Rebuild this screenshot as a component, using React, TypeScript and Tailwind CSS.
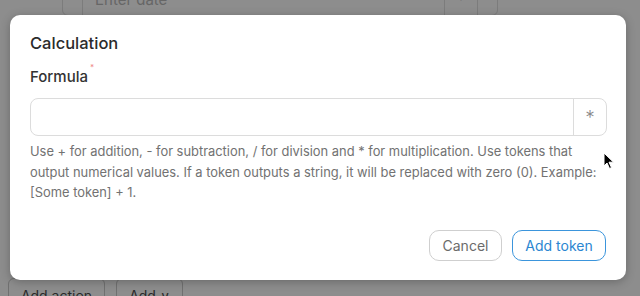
import React from "react";

function Cursor() {
  return (
    <svg width="12" height="18" viewBox="0 0 12 18" className="absolute left-[603px] top-[152px]">
      <path d="M1 1 L1 14 L4 11 L6.5 16.5 L8.5 15.6 L6 10.2 L10.5 10.2 Z" fill="#000" stroke="#fff" strokeWidth="1" strokeLinejoin="round" />
    </svg>
  );
}

export default function App() {
  return (
    <div className="relative h-[296px] w-[640px] overflow-hidden bg-[#8d8d8d] font-['Inter','Liberation_Sans',sans-serif]">
      {/* page behind the dialog, dimmed */}
      <div className="flex h-full flex-col justify-between">
        <div className="-mt-[20px] ml-[62px] flex h-[36px] w-[436px] rounded-md border border-[#7c7c7c]">
          <div className="w-[20px] border-r border-[#7c7c7c]" />
          <div className="flex flex-1 items-center pt-[4px] pl-[12px] text-[15px] leading-[20px] text-[#666]">Enter date</div>
          <div className="flex w-[34px] items-center justify-center border-l border-r border-[#7c7c7c] pt-[4px] text-[15px] leading-[20px] text-[#444]">*</div>
          <div className="w-[19px]" />
        </div>
        <div className="-mb-[10px] ml-[8px] flex gap-[11px]">
          <div className="flex h-[28px] w-[97px] items-start justify-center rounded-md border border-[#707070] pt-[6px] text-[14px] text-[#2a2a2a]">Add action</div>
          <div className="flex h-[28px] w-[67px] items-start justify-center rounded-md border border-[#707070] pt-[6px] text-[14px] text-[#2a2a2a]">Add ∨</div>
        </div>
      </div>

      {/* dialog */}
      <div className="absolute inset-0 pl-[10px] pt-[15px]">
        <div className="flex h-[265px] w-[616px] flex-col rounded-[10px] bg-white px-[20px] pt-[18px] shadow-[0_2px_10px_rgba(0,0,0,0.25)]">
          <h2 className="text-[16.5px] font-medium leading-[20px] text-[#2b2b2b]">Calculation</h2>
          <div className="mt-[14px] flex items-start text-[15px] font-medium leading-[20px] text-[#333]">
            Formula
            <span className="ml-[2px] -mt-[4px] text-[8px] leading-none text-[#f08a8a]">*</span>
          </div>
          <div className="mt-[11px] flex h-[38px] w-[577px] rounded-[8px] border border-[#dcdcdc]">
            <input className="min-w-0 flex-1 rounded-l-[8px] px-3 outline-none" />
            <div className="flex w-[33px] items-center justify-center border-l border-[#dcdcdc] pt-[2px] text-[19px] font-light text-[#8a8a8a]">*</div>
          </div>
          <p className="mt-[6px] w-[574px] text-[12.9px] leading-[20.5px] text-[#727272]">
            Use + for addition, - for subtraction, / for division and * for multiplication. Use tokens that output numerical values. If a token outputs a string, it will be replaced with zero (0). Example: [Some token] + 1.
          </p>
          <div className="mt-auto mb-[19px] flex justify-end gap-[10px]">
            <button className="h-[31px] w-[73px] rounded-[10px] border border-[#cfcfcf] text-[14px] text-[#6b6b6b]">Cancel</button>
            <button className="h-[31px] w-[94px] rounded-[10px] border border-[#3b95dc] text-[14px] text-[#2b86d1]">Add token</button>
          </div>
        </div>
      </div>
      <Cursor />
    </div>
  );
}
